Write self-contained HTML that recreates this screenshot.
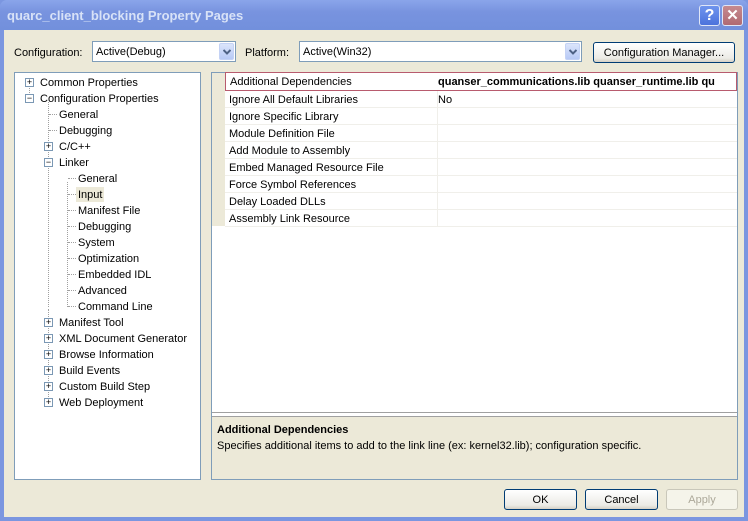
<!DOCTYPE html>
<html><head><meta charset="utf-8"><style>
*{box-sizing:border-box;margin:0;padding:0}
body{width:748px;height:521px;overflow:hidden;background:#7b96e0;font-family:"Liberation Sans",sans-serif;font-size:11px;color:#000;position:relative}
.abs{position:absolute}
#title{left:0;top:0;width:748px;height:30px;background:linear-gradient(#8aa5ea,#7893df 40%,#7290dc);border-radius:7px 7px 0 0}
#title span{position:absolute;left:7px;top:8px;color:#d8e2f7;font-size:13px;font-weight:bold}
.tb{top:5px;width:21px;height:21px;border:1px solid #dfe6f7;border-radius:3px;color:#fff;font-weight:bold;text-align:center;line-height:19px;font-size:16px}
#body{left:4px;top:30px;width:740px;height:487px;background:#ece9d8}
.combo{height:21px;background:#fff;border:1px solid #7f9db9}
.combo .t{position:absolute;left:3px;top:4px}
.combo .b{position:absolute;right:1px;top:1px;width:15px;height:17px;background:linear-gradient(#dbe5fb,#b7c9f6);border:1px solid #c4d2f5;border-radius:2px}
.combo .b svg{position:absolute;left:3px;top:5px}
.btn{height:21px;border:1px solid #003c74;border-radius:3px;background:linear-gradient(#fff,#ecebe6 80%,#d6d0c5);text-align:center;line-height:20px}
.panel{background:#fff;border:1px solid #7f9db9}
.tree div{position:absolute;white-space:nowrap}
.tree .tx{margin-top:1px}
.pm{width:9px;height:9px;border:1px solid #7b98b4;background:#fff;font-size:9px;line-height:6px;text-align:center;color:#000}
.dl{border-left:1px dotted #a0a0a0}
.dh{border-top:1px dotted #a0a0a0;height:0}
.row{position:absolute;left:225px;width:512px;height:17px;border-bottom:1px solid #f0efea}
.row span{position:absolute;left:4px;top:3px}
.row b,.row i{position:absolute;left:213px;top:3px;font-style:normal}
</style></head><body>
<div id="title" class="abs"><span>quarc_client_blocking Property Pages</span>
<div class="abs tb" style="left:699px;background:linear-gradient(#6f94ee,#4c73dc)">?</div>
<div class="abs tb" style="left:722px;background:linear-gradient(#c68a8f,#b06a72);font-size:15px">✕</div></div>
<div id="body" class="abs"></div>

<div class="abs" style="left:14px;top:47px">Configuration:</div>
<div class="abs combo" style="left:92px;top:41px;width:144px"><span class="t">Active(Debug)</span><span class="b"><svg width="8" height="6"><path d="M0.5 1L4 4.5L7.5 1" stroke="#4d6185" stroke-width="2" fill="none"/></svg></span></div>
<div class="abs" style="left:245px;top:47px">Platform:</div>
<div class="abs combo" style="left:299px;top:41px;width:283px"><span class="t">Active(Win32)</span><span class="b"><svg width="8" height="6"><path d="M0.5 1L4 4.5L7.5 1" stroke="#4d6185" stroke-width="2" fill="none"/></svg></span></div>
<div class="abs btn" style="left:593px;top:42px;width:142px;height:21px">Configuration Manager...</div>

<div class="abs panel tree" style="left:14px;top:72px;width:187px;height:408px">
<div class="dl" style="left:14px;top:12px;height:14px"></div>
<div class="dl" style="left:33px;top:29px;height:205px"></div>
<div class="dl" style="left:52px;top:109px;height:125px"></div>
<div class="dl" style="left:33px;top:236px;height:96px"></div>
<div class="pm" style="left:10px;top:5px">+</div><div class="tx" style="left:25px;top:3px">Common Properties</div>
<div class="pm" style="left:10px;top:21px">−</div><div class="tx" style="left:25px;top:19px">Configuration Properties</div>
<div class="dh" style="left:34px;top:41px;width:8px"></div><div class="tx" style="left:44px;top:35px">General</div>
<div class="dh" style="left:34px;top:57px;width:8px"></div><div class="tx" style="left:44px;top:51px">Debugging</div>
<div class="pm" style="left:29px;top:69px">+</div><div class="tx" style="left:44px;top:67px">C/C++</div>
<div class="pm" style="left:29px;top:85px">−</div><div class="tx" style="left:44px;top:83px">Linker</div>
<div class="dh" style="left:53px;top:105px;width:8px"></div><div class="tx" style="left:63px;top:99px">General</div>
<div class="dh" style="left:53px;top:121px;width:8px"></div><div style="left:61px;top:114px;background:#ece9d8;padding:2px 2px 1px">Input</div>
<div class="dh" style="left:53px;top:137px;width:8px"></div><div class="tx" style="left:63px;top:131px">Manifest File</div>
<div class="dh" style="left:53px;top:153px;width:8px"></div><div class="tx" style="left:63px;top:147px">Debugging</div>
<div class="dh" style="left:53px;top:169px;width:8px"></div><div class="tx" style="left:63px;top:163px">System</div>
<div class="dh" style="left:53px;top:185px;width:8px"></div><div class="tx" style="left:63px;top:179px">Optimization</div>
<div class="dh" style="left:53px;top:201px;width:8px"></div><div class="tx" style="left:63px;top:195px">Embedded IDL</div>
<div class="dh" style="left:53px;top:217px;width:8px"></div><div class="tx" style="left:63px;top:211px">Advanced</div>
<div class="dh" style="left:53px;top:233px;width:8px"></div><div class="tx" style="left:63px;top:227px">Command Line</div>
<div class="pm" style="left:29px;top:245px">+</div><div class="tx" style="left:44px;top:243px">Manifest Tool</div>
<div class="pm" style="left:29px;top:261px">+</div><div class="tx" style="left:44px;top:259px">XML Document Generator</div>
<div class="pm" style="left:29px;top:277px">+</div><div class="tx" style="left:44px;top:275px">Browse Information</div>
<div class="pm" style="left:29px;top:293px">+</div><div class="tx" style="left:44px;top:291px">Build Events</div>
<div class="pm" style="left:29px;top:309px">+</div><div class="tx" style="left:44px;top:307px">Custom Build Step</div>
<div class="pm" style="left:29px;top:325px">+</div><div class="tx" style="left:44px;top:323px">Web Deployment</div>
</div>

<div class="abs panel" style="left:211px;top:72px;width:527px;height:408px;overflow:hidden">
<div class="abs" style="left:0;top:0;width:13px;height:153px;background:#ece9d8"></div>
<div class="abs" style="left:225px;top:17px;width:1px;height:136px;background:#f0efea"></div>
<div class="abs" style="left:0;top:339px;width:527px;height:1px;background:#a0a0a0"></div>
<div class="abs" style="left:0;top:343px;width:527px;height:65px;background:#ece9d8;border-top:1px solid #a0a0a0"></div>
<div class="abs" style="left:5px;top:351px;font-weight:bold">Additional Dependencies</div>
<div class="abs" style="left:5px;top:367px">Specifies additional items to add to the link line (ex: kernel32.lib); configuration specific.</div>
</div>
<div class="row" style="top:72px;border:1px solid #b85b6e;height:19px;overflow:hidden"><span>Additional Dependencies</span><b style="left:212px;white-space:nowrap">quanser_communications.lib quanser_runtime.lib qu</b></div>
<div class="row" style="top:91px"><span>Ignore All Default Libraries</span><i>No</i></div>
<div class="row" style="top:108px"><span>Ignore Specific Library</span></div>
<div class="row" style="top:125px"><span>Module Definition File</span></div>
<div class="row" style="top:142px"><span>Add Module to Assembly</span></div>
<div class="row" style="top:159px"><span>Embed Managed Resource File</span></div>
<div class="row" style="top:176px"><span>Force Symbol References</span></div>
<div class="row" style="top:193px"><span>Delay Loaded DLLs</span></div>
<div class="row" style="top:210px"><span>Assembly Link Resource</span></div>

<div class="abs btn" style="left:504px;top:489px;width:73px">OK</div>
<div class="abs btn" style="left:585px;top:489px;width:73px">Cancel</div>
<div class="abs btn" style="left:666px;top:489px;width:72px;border-color:#c9c7ba;color:#aca899;background:#f5f4ea">Apply</div>
</body></html>
